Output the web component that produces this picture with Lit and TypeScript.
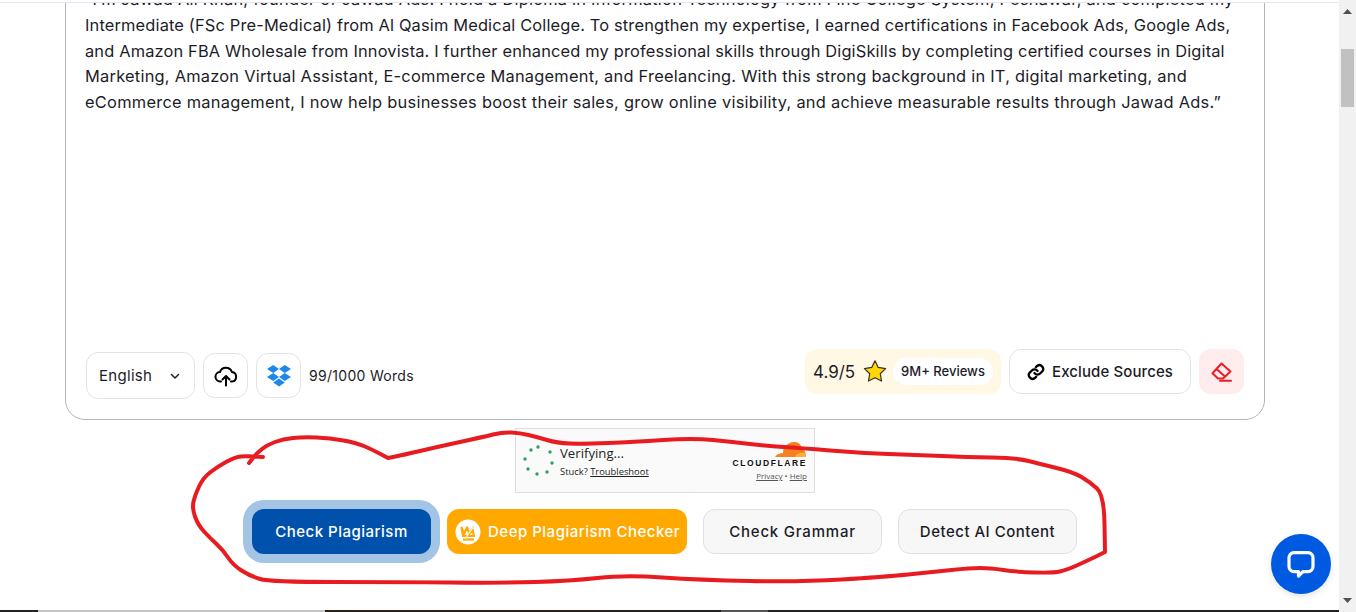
import { LitElement, html, css, svg } from "lit";
import { customElement } from "lit/decorators.js";

// spacing per line, so the substitute font ends each line where the original does
const LINES = [
  { text: "“I’m Jawad Ali Khan, founder of Jawad Ads. I hold a Diploma in Information Technology from Fine College System, Peshawar, and completed my", spacing: 0.24 },
  { text: "Intermediate (FSc Pre-Medical) from Al Qasim Medical College. To strengthen my expertise, I earned certifications in Facebook Ads, Google Ads,", spacing: 0.16 },
  { text: "and Amazon FBA Wholesale from Innovista. I further enhanced my professional skills through DigiSkills by completing certified courses in Digital", spacing: 0.16 },
  { text: "Marketing, Amazon Virtual Assistant, E-commerce Management, and Freelancing. With this strong background in IT, digital marketing, and", spacing: 0.24 },
  { text: "eCommerce management, I now help businesses boost their sales, grow online visibility, and achieve measurable results through Jawad Ads.”", spacing: 0.265 },
];

// the hand-drawn red outline, traced from the screenshot
const SCRIBBLE: number[][] = [
  [263, 457], [247, 456], [235, 457], [217, 467], [203, 478], [195, 495], [192, 508], [198, 525], [210, 538],
  [223, 550], [233, 565], [250, 576], [270, 582], [400, 582], [500, 583], [570, 581], [625, 575], [700, 580],
  [800, 582], [883, 577], [933, 572], [970, 568], [990, 568], [1017, 572], [1053, 573], [1067, 570], [1093, 558],
  [1105, 552], [1105, 552], [1104, 495], [1090, 482], [1073, 472], [1040, 464], [1017, 458], [967, 457], [917, 455], [860, 453],
  [800, 448], [767, 446], [733, 442], [693, 438], [633, 442], [583, 444], [557, 443], [537, 437], [520, 433],
  [503, 432], [483, 437], [437, 447], [403, 455], [388, 458], [388, 458], [373, 450], [357, 443], [330, 438], [303, 437],
  [283, 439], [267, 445], [257, 453], [249, 463],
];

function smooth(pts: number[][]) {
  let d = `M${pts[0][0]} ${pts[0][1]}`;
  for (let i = 1; i < pts.length - 1; i++) {
    const mx = (pts[i][0] + pts[i + 1][0]) / 2;
    const my = (pts[i][1] + pts[i + 1][1]) / 2;
    d += ` Q${pts[i][0]} ${pts[i][1]} ${mx} ${my}`;
  }
  const last = pts[pts.length - 1];
  return d + ` L${last[0]} ${last[1]}`;
}

const SPINNER = [
  [538, 447], [550, 452], [552, 463], [547, 472], [537, 474], [528, 469], [525, 459], [531, 450],
];

@customElement("app-root")
export class AppRoot extends LitElement {
  static styles = css`
    :host {
      display: block;
      position: relative;
      width: 1356px;
      height: 612px;
      overflow: hidden;
      background: #fff;
      font-family: "Inter", "Open Sans", sans-serif;
      color: #1c1c28;
    }
    .shell {
      display: flex;
      height: 612px;
    }
    .page {
      flex: 1;
      min-width: 0;
      display: flex;
      flex-direction: column;
      overflow: hidden;
    }
    .topline {
      flex: none;
      height: 3px;
      box-sizing: border-box;
      border-bottom: 1px solid #e6e4f4;
      background: #fff;
      position: relative;
      z-index: 1;
    }
    .body {
      flex: 1;
      min-height: 0;
      width: 1200px;
      margin-left: 65px;
    }
    .card {
      box-sizing: border-box;
      height: 437px;
      margin-top: -20px;
      border: 1px solid #b5b5b5;
      border-radius: 20px;
      display: flex;
      flex-direction: column;
      justify-content: space-between;
      padding: 0 20px 20px;
    }
    .text {
      margin-left: -1px;
      padding-top: 3px;
      font-size: 16.4px;
      line-height: 25.8px;
      white-space: nowrap;
    }
    .toolbar {
      display: flex;
      justify-content: space-between;
      height: 50px;
    }
    .left, .right {
      display: flex;
      gap: 8px;
    }
    .left {
      align-self: flex-end;
      align-items: center;
      height: 47px;
    }
    .right {
      align-self: flex-start;
      height: 45px;
    }
    .select {
      box-sizing: border-box;
      width: 109px;
      height: 47px;
      border: 1px solid #e4e4e4;
      border-radius: 12px;
      display: flex;
      align-items: center;
      justify-content: space-between;
      padding: 0 13px 0 12px;
      font-size: 15px;
      letter-spacing: 0.3px;
    }
    .square {
      box-sizing: border-box;
      width: 45px;
      height: 45px;
      border: 1px solid #e4e4e4;
      border-radius: 12px;
      display: flex;
      align-items: center;
      justify-content: center;
    }
    .count {
      font-size: 14px;
      letter-spacing: 0.3px;
    }
    .rating {
      box-sizing: border-box;
      width: 196px;
      display: flex;
      align-items: center;
      background: #fff8e4;
      border-radius: 12px;
      padding: 0 8px;
      font-size: 17px;
    }
    .rating svg {
      margin-left: 6px;
    }
    .pill {
      box-sizing: border-box;
      width: 100px;
      margin-left: auto;
      background: #fff;
      border-radius: 14px;
      height: 27px;
      display: flex;
      align-items: center;
      justify-content: center;
      font-size: 13px;
      font-weight: 500;
      white-space: nowrap;
      padding-bottom: 2px;
    }
    .exclude {
      box-sizing: border-box;
      width: 182px;
      border: 1px solid #e4e4e4;
      border-radius: 12px;
      display: flex;
      align-items: center;
      justify-content: center;
      gap: 7px;
      font-size: 15px;
      font-weight: 500;
      letter-spacing: 0.1px;
    }
    .eraser {
      width: 45px;
      border-radius: 12px;
      background: #ffeced;
      display: flex;
      align-items: center;
      justify-content: center;
    }
    .turnstile {
      box-sizing: border-box;
      width: 300px;
      height: 65px;
      margin: 8px auto 0 450px;
      background: #fafafa;
      border: 1px solid #dedede;
      display: flex;
      justify-content: space-between;
      font-family: "Open Sans", sans-serif;
      color: #1d1f20;
    }
    .status {
      padding: 15px 0 0 44px;
    }
    .status b {
      display: block;
      font-weight: 400;
      font-size: 13.2px;
      line-height: 19px;
    }
    .status span {
      display: block;
      font-size: 9.4px;
      line-height: 14px;
      margin-top: 2px;
    }
    .status u {
      text-underline-offset: 1px;
    }
    .brand {
      display: flex;
      flex-direction: column;
      align-items: flex-end;
      padding: 12px 7px 0 0;
    }
    .wordmark {
      font-family: "Liberation Sans", sans-serif;
      font-weight: 700;
      font-size: 8.5px;
      letter-spacing: 1.6px;
      line-height: 10px;
      color: #111;
    }
    .legal {
      margin-top: 3px;
      font-size: 8px;
      line-height: 10px;
      color: #555;
    }
    .actions {
      display: flex;
      gap: 16px;
      margin-top: 16px;
      padding-left: 187px;
    }
    .btn {
      box-sizing: border-box;
      height: 45px;
      border-radius: 12px;
      display: flex;
      align-items: center;
      justify-content: center;
      font-size: 15px;
      font-weight: 500;
      letter-spacing: 0.5px;
      white-space: nowrap;
    }
    .primary {
      width: 179px;
      background: #0051ab;
      color: #fff;
      box-shadow: 0 0 0 9px #a3c4e4;
    }
    .deep {
      width: 240px;
      background: #ffa800;
      color: #fff;
      justify-content: flex-start;
      padding-left: 8px;
      gap: 7px;
    }
    .ghost {
      width: 179px;
      background: #f7f7f7;
      border: 1px solid #e0e0e0;
    }
    .wide {
      letter-spacing: 0.8px;
    }
    .scrollbar {
      flex: none;
      width: 17px;
      background: #f1f1f1;
      display: flex;
      flex-direction: column;
      align-items: center;
      justify-content: space-between;
      padding: 9px 0;
      box-sizing: border-box;
      position: relative;
    }
    .thumb {
      position: absolute;
      top: 49px;
      left: 2px;
      width: 13px;
      height: 58px;
      background: #c1c1c1;
    }
    .strip {
      flex: none;
      height: 2px;
      background: linear-gradient(
        90deg,
        #222 38px,
        #c4c4c4 38px,
        #c4c4c4 325px,
        #2a211c 325px,
        #222 721px,
        #555 721px,
        #555 768px,
        #222 768px
      );
    }
    .scribble {
      position: absolute;
      inset: 0;
      pointer-events: none;
    }
    .chat {
      position: absolute;
      left: 1271px;
      top: 534px;
      width: 60px;
      height: 60px;
      border-radius: 50%;
      background: #0059e1;
      box-shadow: 0 2px 6px rgba(0, 0, 0, 0.12);
      display: flex;
      align-items: center;
      justify-content: center;
    }
  `;

  render() {
    return html`
      <div class="shell">
        <div class="page">
          <div class="topline"></div>
          <div class="body">
            <div class="card">
              <div class="text">${LINES.map((l) => html`<div style="letter-spacing:${l.spacing}px">${l.text}</div>`)}</div>
              <div class="toolbar">
                <div class="left">
                  <div class="select">
                    <span>English</span>
                    <svg width="12" height="12" viewBox="0 0 12 12" fill="none" stroke="#222" stroke-width="1.5" stroke-linecap="round" stroke-linejoin="round"><path d="M2.5 4.5 6 8l3.5-3.5"/></svg>
                  </div>
                  <div class="square">
                    <svg width="24" height="24" viewBox="0 0 24 24" fill="none" stroke="#000" stroke-width="2" stroke-linecap="round" stroke-linejoin="round"><path d="M7 17.5H6.5a4.7 4.7 0 0 1-.6-9.4 6.3 6.3 0 0 1 12-.1 4.8 4.8 0 0 1 .2 9.5H17"/><path d="M12 21.5v-9M8.5 15.5l3.5-3.5 3.5 3.5"/></svg>
                  </div>
                  <div class="square">
                    <svg width="26" height="24" viewBox="0 0 26 24" fill="#1e88ea"><path d="M7.2 1 1 5l6.2 4 5.800-4zM18.8 1 13 5l5.800 4L25 5zM1 13l6.200 4 5.800-4-5.800-4zM18.800 9 13 13l5.800 4 6.200-4zM7.200 18.500 13 14.500l5.800 4-5.800 4z"/></svg>
                  </div>
                  <span class="count">99/1000 Words</span>
                </div>
                <div class="right">
                  <div class="rating">
                    <span>4.9/5</span>
                    <svg width="28" height="27" viewBox="0 0 24 24"><path d="M12 2.500l2.900 5.900 6.500 1-4.700 4.600 1.100 6.500-5.800-3-5.800 3 1.100-6.500L2.600 9.400l6.500-1z" fill="#ffd60a" stroke="#3a3320" stroke-width="1.100" stroke-linejoin="round"/></svg>
                    <span class="pill">9M+ Reviews</span>
                  </div>
                  <div class="exclude">
                    <svg width="18" height="18" viewBox="0 0 24 24" fill="none" stroke="#000" stroke-width="3.200" stroke-linecap="round"><path d="M10 13.500a5 5 0 0 0 7.500.5l3-3a5 5 0 0 0-7-7l-1.700 1.700"/><path d="M14 10.500a5 5 0 0 0-7.500-.5l-3 3a5 5 0 0 0 7 7l1.700-1.700"/></svg>
                    <span>Exclude Sources</span>
                  </div>
                  <div class="eraser">
                    <svg width="21" height="20" viewBox="0 0 21 20" fill="none" stroke="#ee1c25" stroke-width="2" stroke-linejoin="round" stroke-linecap="round"><path d="M10.500 1.500 19.500 9.500 12 16.500H7L1.500 11.300zM5.500 7 13.500 14"/><path d="M9 18.800h11"/></svg>
                  </div>
                </div>
              </div>
            </div>
            <div class="turnstile">
              <div class="status">
                <b>Verifying...</b>
                <span>Stuck? <u>Troubleshoot</u></span>
              </div>
              <div class="brand">
                <svg width="38" height="17" viewBox="0 0 38 17"><path d="M6 16c2-3 5-4 8-4 0-6 5-11 11-11 4 0 7 2 8 6 2 1 4 4 4 9z" fill="#f6821f"/><path d="M26 16c1-3 4-5 11-4v4z" fill="#fbad41"/></svg>
                <div class="wordmark">CLOUDFLARE</div>
                <div class="legal"><u>Privacy</u> • <u>Help</u></div>
              </div>
            </div>
            <div class="actions">
              <div class="btn primary">Check Plagiarism</div>
              <div class="btn deep">
                <svg width="26" height="26" viewBox="0 0 26 26"><circle cx="13" cy="13" r="12.500" fill="#fff"/><path d="M6.500 8.500 9 15l3-6.500 2.500 6.500 3-4.500 1.500 6.500H8z" fill="none" stroke="#ffa800" stroke-width="2.200" stroke-linejoin="round"/><path d="M8 20.500h11" stroke="#ffa800" stroke-width="2.200"/><path d="M10 20 19 7" stroke="#ffe2ad" stroke-width="1.500"/></svg>
                <span>Deep Plagiarism Checker</span>
              </div>
              <div class="btn ghost wide">Check Grammar</div>
              <div class="btn ghost">Detect AI Content</div>
            </div>
          </div>
          <div class="strip"></div>
        </div>
        <div class="scrollbar">
          <svg width="9" height="5" viewBox="0 0 9 5"><path d="M4.500 0 9 5H0z" fill="#505050"/></svg>
          <div class="thumb"></div>
          <svg width="9" height="5" viewBox="0 0 9 5"><path d="M4.500 5 9 0H0z" fill="#505050"/></svg>
        </div>
      </div>
      <svg class="scribble" width="1356" height="612" viewBox="0 0 1356 612">
        ${SPINNER.map((p) => svg`<circle cx=${p[0]} cy=${p[1]} r="1.700" fill="#2f9e5f"/>`)}
        <path d=${smooth(SCRIBBLE)} fill="none" stroke="#e81c20" stroke-width="4" stroke-linecap="round" stroke-linejoin="round"/>
      </svg>
      <div class="chat">
        <svg width="30" height="30" viewBox="0 0 30 30" fill="none" stroke="#fff" stroke-width="3.200" stroke-linejoin="round"><path d="M8 3.600h14a5 5 0 0 1 5 5v9a5 5 0 0 1-5 5h-5l-4.500 4.500v-4.500H8a5 5 0 0 1-5-5v-9a5 5 0 0 1 5-5z"/></svg>
      </div>
    `;
  }
}
